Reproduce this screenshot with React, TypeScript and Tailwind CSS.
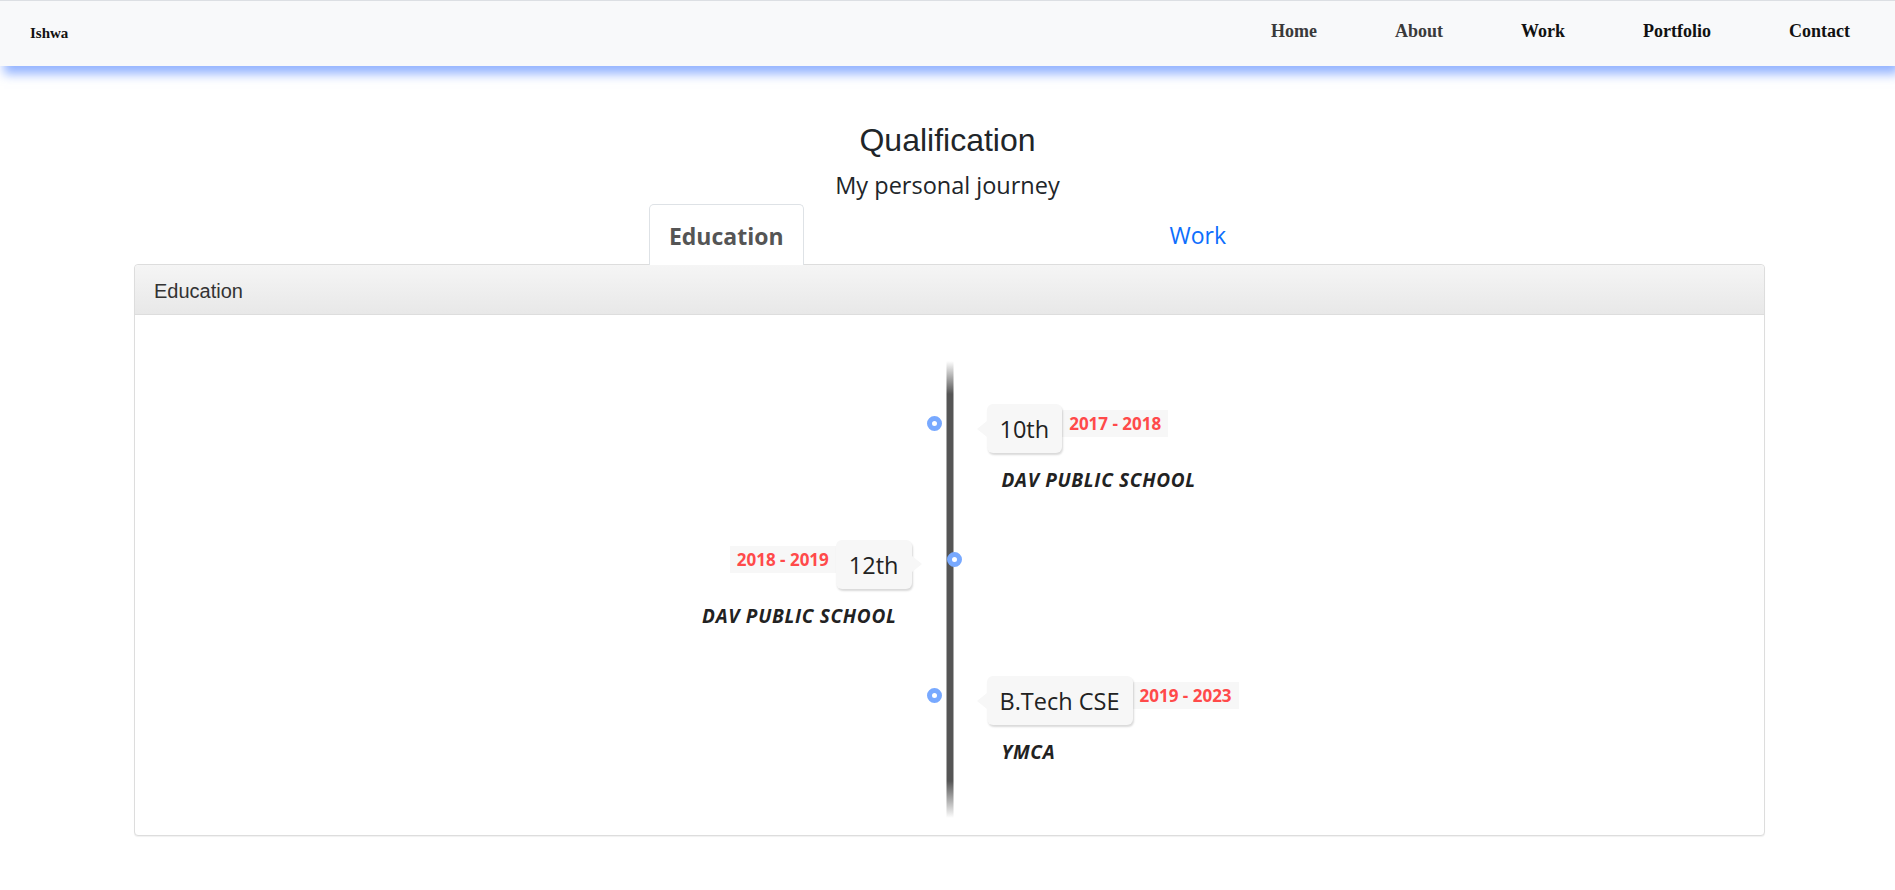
const navLinks = [
  { label: "Home", tone: "text-[#3a3a3a]" },
  { label: "About", tone: "text-[#3a3a3a]" },
  { label: "Work", tone: "text-[#111]" },
  { label: "Portfolio", tone: "text-[#111]" },
  { label: "Contact", tone: "text-[#111]" },
];

type Item = {
  title: string;
  date: string;
  place: string;
  side: "left" | "right";
};

const education: Item[] = [
  { title: "10th", date: "2017 - 2018", place: "DAV PUBLIC SCHOOL", side: "right" },
  { title: "12th", date: "2018 - 2019", place: "DAV PUBLIC SCHOOL", side: "left" },
  { title: "B.Tech CSE", date: "2019 - 2023", place: "YMCA", side: "right" },
];

const Navbar = () => (
  <nav className="h-[66px] border-t border-[#dcdfe3] bg-[#f8f9fa] flex items-center justify-between shadow-[4px_8px_10px_rgba(90,140,255,0.65)] relative z-10 font-['Liberation_Serif',serif] font-bold">
    <a className="pl-[30px] text-[15px] text-[#111]">Ishwa</a>
    <ul className="flex items-center gap-[78px] pr-[45px] pb-[5px] text-[18px]">
      {navLinks.map((link) => (
        <li key={link.label} className={link.tone}>
          {link.label}
        </li>
      ))}
    </ul>
  </nav>
);

const DateTag = ({ date }: { date: string }) => (
  <span className="mt-[6px] bg-[#f7f7f7] px-[7px] py-[2px] text-[17px] leading-[23px] font-bold text-[#ff4a4a] whitespace-nowrap">
    {date}
  </span>
);

const Dot = ({ className }: { className: string }) => (
  <span
    className={`absolute top-[12px] w-[15px] h-[15px] rounded-full bg-white border-[5px] border-[#78a9ff] z-10 ${className}`}
  />
);

const TimelineRow = ({ item }: { item: Item }) => {
  const box = (arrow: "left" | "right") => (
    <div className="relative bg-[#f7f7f7] rounded-[6px] px-[13px] pt-[9px] pb-[7px] text-[23.5px] leading-[33px] text-[#222] shadow-[1px_2px_2px_rgba(0,0,0,0.15)] whitespace-nowrap">
      {item.title}
      {arrow === "left" ? (
        <span className="absolute left-[-10px] top-[17px] w-0 h-0 border-y-[8px] border-y-transparent border-r-[10px] border-r-[#f7f7f7]" />
      ) : (
        <span className="absolute right-[-10px] top-[16px] w-0 h-0 border-y-[8px] border-y-transparent border-l-[10px] border-l-[#f7f7f7]" />
      )}
    </div>
  );

  const place = "mt-[15px] text-[19px] leading-[25px] tracking-[0.7px] font-bold italic text-[#222]";

  return (
    <div className="grid grid-cols-2 mb-[47px] last:mb-0">
      {item.side === "left" ? (
        <>
          <div className="relative flex flex-col items-end pr-[38px]">
            <div className="flex items-start">
              <DateTag date={item.date} />
              {box("right")}
            </div>
            <p className={`${place} mr-[15px]`}>{item.place}</p>
            <Dot className="right-[-12.5px]" />
          </div>
          <div />
        </>
      ) : (
        <>
          <div />
          <div className="relative flex flex-col items-start pl-[37px]">
            <div className="flex items-start">
              {box("left")}
              <DateTag date={item.date} />
            </div>
            <p className={`${place} ml-[15px]`}>{item.place}</p>
            <Dot className="left-[-22.5px]" />
          </div>
        </>
      )}
    </div>
  );
};

export default function App() {
  return (
    <div className="min-h-[890px] bg-white font-['Open_Sans',sans-serif] text-[#212529]">
      <Navbar />

      <section className="pt-[54px]">
        <h2 className="text-center font-['Liberation_Sans',Arial,sans-serif] text-[32px] leading-[40px]">
          Qualification
        </h2>
        <p className="mt-[9px] text-center text-[23.5px] leading-[32px]">My personal journey</p>

        {/* Tabs */}
        <div className="mt-[2px] flex justify-center items-end gap-[346px]">
          <button className="relative z-10 -mb-px bg-white border border-b-0 border-[#dee2e6] rounded-t-[5px] px-[19px] pt-[15px] pb-[13px] text-[23px] leading-[32px] font-bold text-[#555]">
            Education
          </button>
          <button className="-mb-px border border-transparent px-[19px] pt-[15px] pb-[13px] text-[23px] leading-[32px] text-[#0d6efd]">
            Work
          </button>
        </div>

        {/* Panel */}
        <div className="ml-[134px] w-[1631px] border border-[#ddd] rounded-[4px] bg-white shadow-[0_1px_1px_rgba(0,0,0,0.06)]">
          <div className="bg-[linear-gradient(to_bottom,#f5f5f5,#e8e8e8)] border-b border-[#ddd] rounded-t-[4px] px-[19px] pt-[15px] pb-[11px] font-['Liberation_Sans',Arial,sans-serif] text-[20px] leading-[23px] text-[#333]">
            Education
          </div>

          <div className="pt-[46px] pb-[17px]">
            <div className="relative pt-[43px] pb-[53px]">
              <div className="absolute top-0 bottom-0 left-1/2 -translate-x-1/2 w-[7px] bg-[linear-gradient(to_bottom,rgba(85,85,85,0)_0px,#555_33px,#555_calc(100%_-_37px),rgba(85,85,85,0)_100%)]" />
              {education.map((item) => (
                <TimelineRow key={item.title} item={item} />
              ))}
            </div>
          </div>
        </div>
      </section>
    </div>
  );
}
